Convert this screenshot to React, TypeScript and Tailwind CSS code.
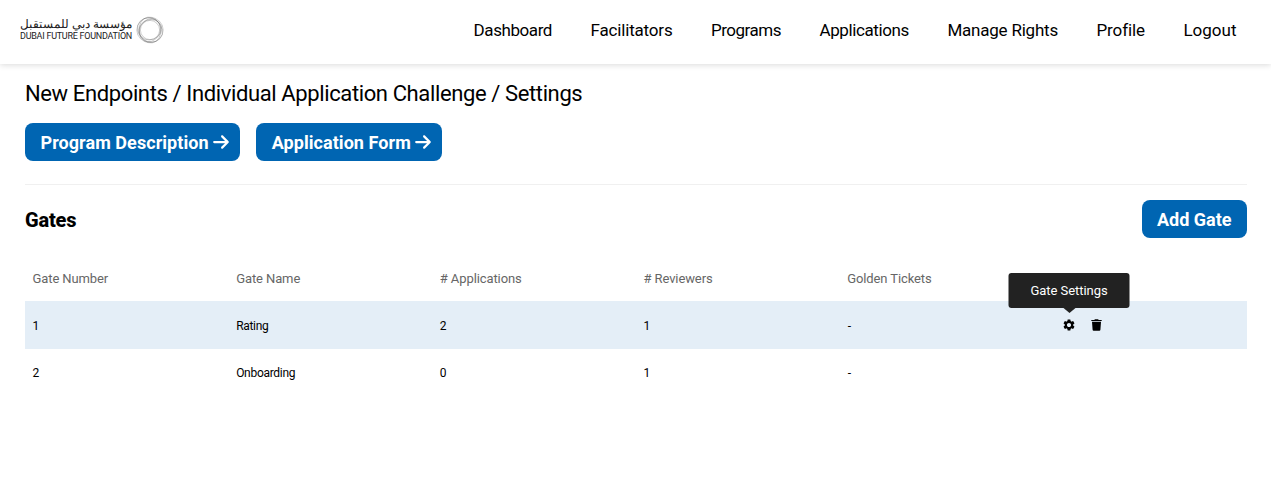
import { FaArrowRight } from "react-icons/fa6";
import { MdSettings } from "react-icons/md";

const NAV = [
  { label: "Dashboard", tracking: "tracking-[-0.42px]" },
  { label: "Facilitators", tracking: "tracking-[-0.18px]" },
  { label: "Programs", tracking: "tracking-[-0.49px]" },
  { label: "Applications", tracking: "tracking-[-0.39px]" },
  { label: "Manage Rights", tracking: "tracking-[-0.22px]" },
  { label: "Profile", tracking: "tracking-[-0.1px]" },
  { label: "Logout", tracking: "tracking-normal" },
];
const HEADERS = ["Gate Number", "Gate Name", "# Applications", "# Reviewers", "Golden Tickets", ""];
const GATES = [
  { number: 1, name: "Rating", applications: 2, reviewers: 1, tickets: "-" },
  { number: 2, name: "Onboarding", applications: 0, reviewers: 1, tickets: "-" },
];

function Logo() {
  return (
    <div className="flex items-center gap-[3px] pb-[5px] text-[#222]">
      <div className="flex w-[113px] flex-col whitespace-nowrap">
        <span dir="rtl" className="self-start text-[12.1px] leading-[13px]">مؤسسة دبي للمستقبل</span>
        <span className="text-[9px] leading-[10px] tracking-[-0.25px]">DUBAI FUTURE FOUNDATION</span>
      </div>
      <svg width="28" height="28" viewBox="0 0 28 28" fill="none" stroke="#555" strokeWidth="0.28">
        <ellipse cx="14" cy="14" rx="13.2" ry="12.6" />
        <ellipse cx="14" cy="14" rx="13.2" ry="11.4" transform="rotate(40 14 14)" />
        <ellipse cx="14" cy="14" rx="13" ry="10.8" transform="rotate(80 14 14)" />
        <ellipse cx="14.3" cy="14" rx="12" ry="10.2" transform="rotate(120 14 14)" />
        <ellipse cx="13.7" cy="14.2" rx="11.6" ry="10" transform="rotate(160 14 14)" />
        <circle cx="14" cy="14" r="9.6" />
      </svg>
    </div>
  );
}

function TrashIcon() {
  return (
    <svg width="11" height="12" viewBox="0 0 11 12" fill="currentColor">
      <path d="M0.3 0.9H3.3L3.9 0.2H7.1L7.7 0.9H10.7V2.1H0.3ZM1 2.8H10L9.4 10.8Q9.3 11.8 8.4 11.8H2.6Q1.7 11.8 1.6 10.8Z" />
    </svg>
  );
}

function Button({ children, arrow }: { children: string; arrow?: boolean }) {
  return (
    <button className={`flex h-[38px] items-center rounded-[8px] bg-[#0065b2] text-[18px] font-bold text-white ${arrow ? "pr-[10.5px] pl-[15.5px] tracking-[0.06px]" : "pr-[15.5px] pl-[14.5px]"}`}>
      <span>{children}</span>
      {arrow && <FaArrowRight className="ml-[3px] size-[18px]" />}
    </button>
  );
}

export default function App() {
  return (
    <div className="h-[499px] overflow-hidden bg-white font-['Roboto',sans-serif] text-black">
      <header className="flex h-16 items-center justify-between pr-[34.5px] pl-[20px] shadow-[0_1px_6px_rgba(0,0,0,0.15)]">
        <Logo />
        <nav className="flex gap-[38.5px] pb-[3px] text-[17px]">
          {NAV.map((n) => (
            <a key={n.label} className={n.tracking}>{n.label}</a>
          ))}
        </nav>
      </header>
      <main className="pr-6 pl-[25px]">
        <h1 className="pt-[14px] text-[22px] leading-[32px] tracking-[-0.38px]">
          New Endpoints / Individual Application Challenge / Settings
        </h1>
        <div className="mt-[13px] flex gap-4">
          <Button arrow>Program Description</Button>
          <Button arrow>Application Form</Button>
        </div>
        <hr className="mt-[23px] border-[#f0f0f0]" />
        <div className="mt-[15px] flex items-center justify-between">
          <h2 className="pt-[2px] text-[20px] font-extrabold tracking-[-0.2px]">Gates</h2>
          <Button>Add Gate</Button>
        </div>
        <div className="mt-[18px]">
          <div className="grid h-[45px] grid-cols-6 items-center text-[13px] tracking-[-0.1px] text-[#666]">
            {HEADERS.map((h) => <div key={h} className="pl-[7.5px]">{h}</div>)}
          </div>
          {GATES.map((g, i) => (
            <div key={g.number} className={`grid h-12 grid-cols-6 items-center text-[12px] tracking-[-0.3px] ${i === 0 ? "bg-[#e4eef7] pt-px" : ""}`}>
              <div className="pl-[7.5px]">{g.number}</div>
              <div className="pl-[7.5px]">{g.name}</div>
              <div className="pl-[7.5px]">{g.applications}</div>
              <div className="pl-[7.5px]">{g.reviewers}</div>
              <div className="pl-2">{g.tickets}</div>
              {i === 0 && (
                <div className="flex items-center gap-[15px] pb-px pl-[18.7px]">
                  <div className="relative">
                    <MdSettings className="size-[14px]" />
                    <div className="absolute bottom-[24px] left-1/2 flex h-[35px] w-[121px] -translate-x-1/2 items-center justify-center rounded-[3px] bg-[#222] text-[13px] tracking-[-0.05px] text-white">
                      Gate Settings
                      <span className="absolute top-full left-1/2 -translate-x-1/2 border-x-[6px] border-t-[5px] border-x-transparent border-t-[#222]" />
                    </div>
                  </div>
                  <TrashIcon />
                </div>
              )}
            </div>
          ))}
        </div>
      </main>
    </div>
  );
}
